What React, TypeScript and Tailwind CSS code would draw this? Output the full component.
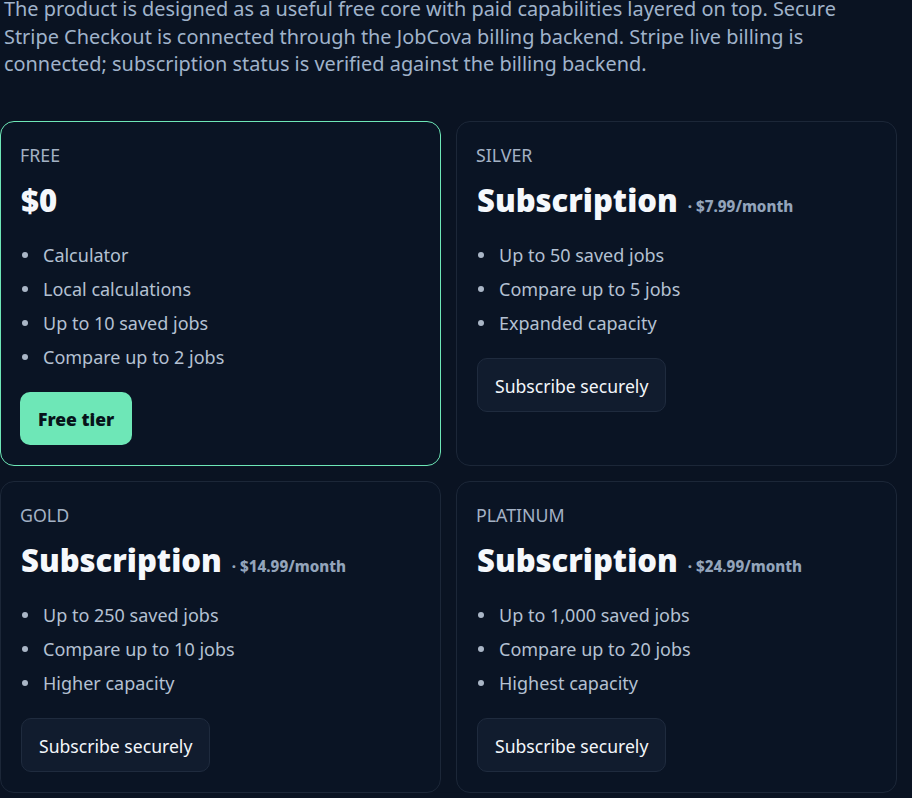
import React from "react";

type Plan = {
  label: string;
  price?: string;
  heading: string;
  items: string[];
  free?: boolean;
};

const plans: Plan[] = [
  { label: "FREE", heading: "$0", items: ["Calculator", "Local calculations", "Up to 10 saved jobs", "Compare up to 2 jobs"], free: true },
  { label: "SILVER", heading: "Subscription", price: "· $7.99/month", items: ["Up to 50 saved jobs", "Compare up to 5 jobs", "Expanded capacity"] },
  { label: "GOLD", heading: "Subscription", price: "· $14.99/month", items: ["Up to 250 saved jobs", "Compare up to 10 jobs", "Higher capacity"] },
  { label: "PLATINUM", heading: "Subscription", price: "· $24.99/month", items: ["Up to 1,000 saved jobs", "Compare up to 20 jobs", "Highest capacity"] },
];

function Card({ p }: { p: Plan }) {
  return (
    <div
      className={
        "rounded-[14px] border bg-[#0a1424] py-5 pl-[19px] pr-5 flex flex-col items-start " +
        (p.free ? "border-[#6ee7b7]" : "border-[#1c2738]")
      }
    >
      <div className="mt-[1px] text-[17.8px] leading-6 text-[#a3b1c4]">{p.label}</div>
      <div className="ml-[1px] mt-[15px] flex items-baseline gap-[10px]">
        <span className="text-[31px] leading-9 font-black text-[#f5f8fc]">{p.heading}</span>
        {p.price && <span className="text-[15.2px] font-extrabold text-[#93a4bb]">{p.price}</span>}
      </div>
      <ul className="mt-6 flex flex-col gap-2">
        {p.items.map((it) => (
          <li key={it} className="flex items-center text-[18px] leading-[26px] text-[#b4c1d2]">
            <span className="ml-[2px] mr-[15px] h-[6px] w-[6px] rounded-full bg-[#aab6c6]" />
            {it}
          </li>
        ))}
      </ul>
      {p.free ? (
        <button className="mt-[22px] h-[53px] rounded-[10px] bg-[#6ee7b7] px-[18px] pt-[2px] text-[17.5px] font-black text-[#07131a]">
          Free tier
        </button>
      ) : (
        <button className="ml-[1px] mt-[22px] h-[54px] rounded-[10px] border border-[#1f2b3e] bg-[#111c2e] px-[17px] pt-[3px] text-[17.6px] text-[#f3f6fa]">
          Subscribe securely
        </button>
      )}
    </div>
  );
}

export default function App() {
  return (
    <div
      className="min-h-[798px] w-[912px] overflow-hidden bg-[#0a1322]"
      style={{ fontFamily: '"Noto Sans", "Open Sans", sans-serif' }}
    >
      <p className="-mt-[5px] pl-[4px] pr-[60px] text-[19.9px] leading-[27.5px] text-[#a0b3cb]">
        The product is designed as a useful free core with paid capabilities layered on top. Secure Stripe Checkout is
        connected through the JobCova billing backend. Stripe live billing is connected; subscription status is verified
        against the billing backend.
      </p>
      <div className="mt-[43px] grid w-[897px] grid-cols-2 gap-[15px]">
        {plans.map((p) => (
          <Card key={p.label} p={p} />
        ))}
      </div>
    </div>
  );
}
